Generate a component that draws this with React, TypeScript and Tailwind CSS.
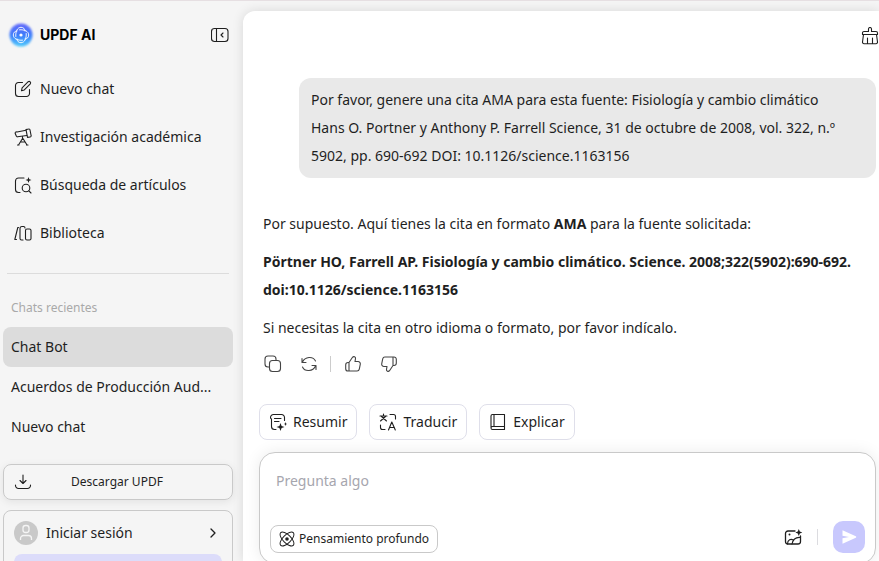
import { useState } from "react";
import type { ReactNode } from "react";

interface IconProps {
  children: ReactNode;
  className?: string;
}

const Icon: React.FC<IconProps> = ({ children, className = "size-[18px]" }) => (
  <svg
    viewBox="0 0 18 18"
    fill="none"
    stroke="currentColor"
    strokeWidth="1.1"
    strokeLinecap="round"
    strokeLinejoin="round"
    className={`shrink-0 ${className}`}
    aria-hidden="true"
  >
    {children}
  </svg>
);

const Logo = () => (
  <svg viewBox="0 0 24 24" className="size-6 shrink-0 overflow-visible" fill="none" aria-hidden="true">
    <defs>
      <linearGradient id="logo" x1="0" y1="0" x2="0" y2="1">
        <stop offset="0" stopColor="#6468fa" />
        <stop offset="0.5" stopColor="#3f7cfa" />
        <stop offset="1" stopColor="#50cbfc" />
      </linearGradient>
      <filter id="glow" x="-15%" y="-15%" width="130%" height="130%">
        <feGaussianBlur stdDeviation="0.9" />
      </filter>
    </defs>
    <circle cx="12" cy="12" r="11.500" fill="url(#logo)" filter="url(#glow)" />
    <g stroke="#fff" strokeWidth="0.9" strokeLinecap="round">
      {[0, 90, 180, 270].map((angle) => (
        <path
          key={angle}
          d="M6.800 13.500C6.300 8.500 8.500 4.300 12 4.300C14.500 4.300 15.800 5.800 16 8"
          transform={`rotate(${angle} 12 12)`}
        />
      ))}
    </g>
    <circle cx="12" cy="12" r="1.600" fill="#fff" />
  </svg>
);

const EditIcon = () => (
  <Icon>
    <path d="M8.500 2.500H4.500a3 3 0 0 0-3 3v8a3 3 0 0 0 3 3h8a3 3 0 0 0 3-3v-4" />
    <path d="M7.500 10.800l.6-3L14.200 1.700a1.500 1.500 0 0 1 2.100 2.100L10.300 9.900z" />
  </Icon>
);

const TelescopeIcon = () => (
  <Icon>
    <path d="M3 4L12 2.200M3.500 8.800L12.800 7.500M3 4a1.300 1.300 0 0 0-1.800 1.600L2.300 8a1 1 0 0 0 1.200.8" />
    <path d="M12 1.600l2.500-.6a1.200 1.200 0 0 1 1.500 1l1.100 5.500a1.200 1.200 0 0 1-1 1.500l-2.600.4z" />
    <path d="M8.500 8.500v2M8.500 10.500L4.500 17M9 10.500l4 6.500M3.500 17H5M12.500 17H14M6.500 14h4.500" />
  </Icon>
);

const SearchIcon = () => (
  <Icon>
    <path d="M10 2H4.500a3 3 0 0 0-3 3v8.500a3 3 0 0 0 3 3H6" />
    <circle cx="12" cy="12" r="3.800" />
    <path d="M14.800 14.800L17 17" />
    <path d="M14.500 1l.8 2.200 2.200.8-2.200.8-.8 2.200-.8-2.200L11.500 4l2.200-.8z" fill="currentColor" stroke="none" />
  </Icon>
);

const LibraryIcon = () => (
  <Icon>
    <path d="M4.500 3.500H3.800L.8 15.500h1.700" />
    <path d="M6 4.500A2 2 0 0 1 8 2.500h1.500M6 4.500v10a1.500 1.500 0 0 0 1.500 1.500H9" />
    <rect x="11.500" y="5" width="5.500" height="11" rx="1.500" />
    <path d="M9.500 2.500a1.500 1.500 0 0 1 1.500 1.500" />
  </Icon>
);

const AtomIcon = () => (
  <Icon className="size-4">
    <ellipse cx="9" cy="9" rx="10" ry="4.500" transform="rotate(45 9 9)" />
    <ellipse cx="9" cy="9" rx="10" ry="4.500" transform="rotate(-45 9 9)" />
    <circle cx="9" cy="9" r="2" fill="currentColor" stroke="none" />
  </Icon>
);

const SummaryIcon = () => (
  <Icon>
    <path d="M15.500 7.500V4.500a3 3 0 0 0-3-3H4.500a3 3 0 0 0-3 3 1.500 1.500 0 0 0 1 1.500v7.500a3 3 0 0 0 3 3H7M5.500 5.500h6.500M5.500 8.500h4.500" />
    <path d="M11.500 10l1.100 2.900 2.900 1.100-2.900 1.100-1.100 2.900-1.100-2.900L7.500 14l2.900-1.100zM16.500 9l.5 1.500 1 .5-1 .5-.5 1.500-.5-1.500-1-.5 1-.5z" fill="currentColor" stroke="none" />
  </Icon>
);

const TranslateIcon = () => (
  <Icon>
    <path d="M1 3h7M4.500 1v2M2.500 3.500L7.500 8M6.500 3.500L1.500 8M11 1.500h3.500a2 2 0 0 1 2 2V6M1.500 12v2.500a2 2 0 0 0 2 2H6" />
    <path d="M9.500 17l3.300-8 3.500 8M10.500 14.500h5" />
  </Icon>
);

const BookIcon = () => (
  <Icon>
    <path d="M2 14.500V3a1.500 1.500 0 0 1 1.500-1.500H15.500V13.500H3.500a1.500 1.500 0 0 0 0 3H15.500V13.500M5 1.500v12" />
  </Icon>
);

const navItems = [
  { label: "Nuevo chat", icon: <EditIcon /> },
  { label: "Investigación académica", icon: <TelescopeIcon /> },
  { label: "Búsqueda de artículos", icon: <SearchIcon /> },
  { label: "Biblioteca", icon: <LibraryIcon /> },
];

const recentChats = ["Chat Bot", "Acuerdos de Producción Aud...", "Nuevo chat"];

const quickActions = [
  { label: "Resumir", icon: <SummaryIcon /> },
  { label: "Traducir", icon: <TranslateIcon /> },
  { label: "Explicar", icon: <BookIcon /> },
];

const Sidebar = () => {
  const [selected, setSelected] = useState(0);

  return (
    <aside className="flex w-[243px] shrink-0 flex-col pl-[3px] pr-2.5">
      <div className="mt-[22px] flex h-6 shrink-0 items-center pl-1.5 pr-1">
        <Logo />
        <span className="ml-[7px] font-['Inter'] text-sm font-bold text-black">UPDF AI</span>
        <button aria-label="Ocultar barra lateral" className="ml-auto">
          <Icon>
            <rect x="0.500" y="2.500" width="16.500" height="13" rx="3" />
            <path d="M5.500 2.500v13M12 7l-2 2 2 2" />
          </Icon>
        </button>
      </div>

      <nav className="mt-[18px] shrink-0">
        {navItems.map((item) => (
          <button key={item.label} className="flex h-12 w-full items-center gap-2 pl-[11px]">
            {item.icon}
            {item.label}
          </button>
        ))}
      </nav>

      <hr className="mx-1 mt-4 border-[#dcdcdc]" />

      <h2 className="mt-6 pl-2 text-xs leading-5 text-[#a9a9a9]">Chats recientes</h2>
      <div className="mt-[9px] shrink-0">
        {recentChats.map((chat, i) => (
          <button
            key={chat}
            onClick={() => setSelected(i)}
            className={`block h-10 w-full truncate rounded-lg px-2 text-left ${
              selected === i ? "bg-[#dcdcdc]" : ""
            }`}
          >
            {chat}
          </button>
        ))}
      </div>

      <button className="mt-[17px] flex h-9 shrink-0 items-center rounded-lg border border-[#c9c9c9] pl-2.5 pr-[30px] text-xs shadow-[0_2px_8px_rgba(0,0,0,0.08)]">
        <Icon>
          <path d="M9 2v8.500M6 7.500l3 3 3-3M1.500 12v.5a3 3 0 0 0 3 3h9a3 3 0 0 0 3-3V12" />
        </Icon>
        <span className="flex-1">Descargar UPDF</span>
      </button>

      <div className="mt-2.5 shrink-0 rounded-lg border border-[#c9c9c9] px-2.5 pb-2.5">
        <button className="flex h-[43px] w-full items-center gap-2">
          <svg viewBox="0 0 24 24" className="size-6" fill="none" stroke="#f5f5f5" strokeWidth="1.300" aria-hidden="true">
            <circle cx="12" cy="12" r="12" fill="#c9c9c9" stroke="none" />
            <rect x="9" y="4.500" width="6" height="7" rx="2.500" />
            <path d="M6.500 19v-1.500a3 3 0 0 1 3-3h5a3 3 0 0 1 3 3V19" />
          </svg>
          Iniciar sesión
          <Icon className="ml-auto size-[18px]">
            <path d="M7 5l4 4-4 4" strokeWidth="1.300" />
          </Icon>
        </button>
        <div className="h-9 rounded-lg bg-[#dcdcfa]" />
      </div>
    </aside>
  );
};

const Composer = () => {
  const [text, setText] = useState("");

  return (
    <form
      onSubmit={(e) => e.preventDefault()}
      className="mt-3 shrink-0 rounded-2xl border border-[#c9c9c9] bg-white px-2.5 pb-2.5 shadow-[0_0_16px_rgba(0,0,0,0.08)]"
    >
      <textarea
        aria-label="Pregunta algo"
        value={text}
        onChange={(e) => setText(e.target.value)}
        placeholder="Pregunta algo"
        className="mt-4 block h-12 w-full resize-none px-1.5 leading-6 outline-none placeholder:text-[#a6a6ae]"
      />
      <div className="flex items-center pt-1">
        <button
          type="button"
          className="flex h-7 items-center gap-1 self-end rounded-lg border border-[#c9c9c9] px-2 text-xs"
        >
          <AtomIcon />
          Pensamiento profundo
        </button>
        <button type="button" aria-label="Subir imagen" className="ml-auto">
          <Icon className="size-[18px] overflow-visible">
            <path d="M11 3H4a2.500 2.500 0 0 0-2.500 2.500v8A2.500 2.500 0 0 0 4 16h10a2.500 2.500 0 0 0 2.500-2.500V8" strokeWidth="1.300" />
            <path d="M3.500 16c0-4 3.500-6 6-3.500M8 16c1-4.500 4-7 8.500-6.500" />
            <circle cx="5.500" cy="6.500" r="1" fill="currentColor" stroke="none" />
            <path d="M14.800 1l1 2.500 2.500 1-2.500 1-1 2.500-1-2.500-2.500-1 2.500-1z" fill="currentColor" stroke="none" />
          </Icon>
        </button>
        <span className="mx-[15px] h-4 w-px bg-[#dcdce0]" />
        <button aria-label="Enviar" className="flex size-8 items-center justify-center rounded-[10px] bg-[#c8c8fd]">
          <svg viewBox="0 0 16 16" className="size-4" fill="#fff" aria-hidden="true">
            <path d="M1.500 1.300L14.800 7.300a.8.8 0 0 1 0 1.400L1.500 14.800V9.300L8 8 1.500 6.700z" />
          </svg>
        </button>
      </div>
    </form>
  );
};

const App = () => (
  <div className="flex h-screen overflow-hidden border-t border-[#e6dfe2] bg-[#f5f5f5] font-['Noto_Sans',sans-serif] text-sm text-[#1f1f1f]">
    <Sidebar />
    <main className="mt-2.5 flex min-w-0 flex-1 flex-col rounded-tl-xl bg-white pl-4 pr-[3px] shadow-[0_0_12px_rgba(0,0,0,0.12)]">
      <header className="-mr-[3px] flex h-[67px] shrink-0 items-start justify-end pt-4">
        <button aria-label="Limpiar conversación">
          <Icon>
            <path d="M7.500 4.500V2a1.500 1.500 0 0 1 3 0v2.500H15a1.500 1.500 0 0 1 1.500 1.500v1.500h-15V6A1.500 1.500 0 0 1 3 4.500zM2.500 7.500L1.500 15a1.500 1.500 0 0 0 1.500 1.700h12a1.500 1.500 0 0 0 1.500-1.700l-1-7.500M6.500 11v5.500M11.500 11v5.500" />
          </Icon>
        </button>
      </header>

      <p className="ml-10 shrink-0 rounded-xl bg-[#e9e9e9] px-3 py-2 leading-7">
        Por favor, genere una cita AMA para esta fuente: Fisiología y cambio climático
        <br />
        Hans O. Portner y Anthony P. Farrell Science, 31 de octubre de 2008, vol. 322, n.º
        <br />
        5902, pp. 690-692 DOI: 10.1126/science.1163156
      </p>

      <article className="mt-8 flex shrink-0 flex-col gap-2.5 pl-1 leading-7">
        <p>
          Por supuesto. Aquí tienes la cita en formato <strong>AMA</strong> para la fuente solicitada:
        </p>
        <p className="font-bold">
          Pörtner HO, Farrell AP. Fisiología y cambio climático. Science. 2008;322(5902):690-692.
          doi:10.1126/science.1163156
        </p>
        <p>Si necesitas la cita en otro idioma o formato, por favor indícalo.</p>
      </article>

      <div className="mt-3 flex h-5 shrink-0 items-center gap-[18px] pl-[5px] text-[#444]">
        <button aria-label="Copiar">
          <Icon>
            <rect x="1" y="1" width="11" height="11" rx="3" />
            <rect x="5.500" y="5.500" width="11" height="11" rx="3" fill="#fff" />
          </Icon>
        </button>
        <button aria-label="Regenerar">
          <Icon>
            <path d="M2 3.500v4h4M2.500 7C5 1.500 13 .8 15.500 6M16 14.500v-4h-4M15.500 11C13 16.500 5 17.200 2.500 12" />
          </Icon>
        </button>
        <span className="-ml-1.5 -mr-[5px] h-4 w-px bg-[#ccc]" />
        <button aria-label="Me gusta">
          <Icon>
            <path d="M5 7.500l3.500-5.200a1.700 1.700 0 0 1 3 1.400L11 6.500h3a2.300 2.300 0 0 1 2.300 2.700l-1 5a2.300 2.300 0 0 1-2.300 1.800H4A2.300 2.300 0 0 1 1.700 13.700v-4A2.300 2.300 0 0 1 4 7.500zM5 7.500V16" />
          </Icon>
        </button>
        <button aria-label="No me gusta">
          <Icon>
            <path d="M13 10.500l-3.500 5.200a1.700 1.700 0 0 1-3-1.400L7 11.500H4a2.300 2.300 0 0 1-2.300-2.700l1-5A2.300 2.300 0 0 1 5 2h9a2.300 2.300 0 0 1 2.300 2.300v4a2.300 2.300 0 0 1-2.300 2.200zM13 10.500V2" />
          </Icon>
        </button>
      </div>

      <div className="mt-[30px] flex shrink-0 gap-3">
        {quickActions.map((action) => (
          <button
            key={action.label}
            className="flex h-9 items-center gap-1.5 rounded-lg border border-[#dfdfea] px-[9px]"
          >
            {action.icon}
            {action.label}
          </button>
        ))}
      </div>

      <Composer />
    </main>
  </div>
);

export default App;
